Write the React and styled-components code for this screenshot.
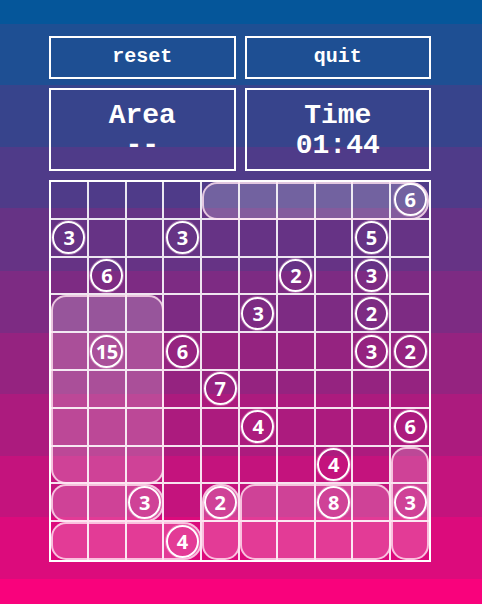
import styled, { createGlobalStyle } from 'styled-components';

const bands = [
  ['#05569a', 0, 24],
  ['#1e4f93', 24, 85],
  ['#37448c', 85, 147],
  ['#4f3b89', 147, 208],
  ['#663385', 208, 271],
  ['#7d2b83', 271, 333],
  ['#952380', 333, 394],
  ['#ac1b7e', 394, 456],
  ['#c4137d', 456, 517],
  ['#dc0b7c', 517, 579],
  ['#f9027c', 579, 700]
];

const stripes = bands.map(([c, a, b]) => `${c} ${a}px ${b}px`).join(', ');

const GlobalStyle = createGlobalStyle`
  html, body {
    margin: 0;
    height: 100%;
  }
  body {
    background: linear-gradient(to bottom, ${stripes});
    background-repeat: no-repeat;
    color: #fff;
  }
`;

const CELL = 37.8;

const Page = styled.div`
  width: 382px;
  margin-left: 49px;
  padding-top: 36px;
  display: flex;
  flex-direction: column;
  gap: 9px;
`;

const Row = styled.div`
  display: grid;
  grid-template-columns: 1fr 1fr;
  gap: 9px;
`;

const Button = styled.button`
  height: 43px;
  background: transparent;
  border: 2px solid #fff;
  color: #fff;
  font-family: 'Liberation Mono', 'Courier New', monospace;
  font-weight: 700;
  font-size: 20px;
  padding: 0 0 2px;
  cursor: pointer;
`;

const InfoBox = styled.div`
  height: 83px;
  box-sizing: border-box;
  border: 2px solid #fff;
  display: flex;
  flex-direction: column;
  align-items: center;
  justify-content: center;
  font-family: 'Liberation Mono', 'Courier New', monospace;
  font-weight: 700;
  font-size: 28px;
  line-height: 30px;
  padding-top: 2px;
`;

const Board = styled.div`
  position: relative;
  width: 382px;
  height: 382px;
  box-sizing: border-box;
  border: 2px solid #fff;
  display: grid;
  grid-template-columns: repeat(10, 1fr);
  grid-template-rows: repeat(10, 1fr);
`;

const Cell = styled.div`
  position: relative;
  display: flex;
  align-items: center;
  justify-content: center;
  border-right: ${(p) => (p.$lastCol ? 'none' : '2px solid rgba(255,255,255,0.88)')};
  border-bottom: ${(p) => (p.$lastRow ? 'none' : '2px solid rgba(255,255,255,0.88)')};
`;

// highlighted rectangle drawn over the cells it covers
const Region = styled.div`
  position: absolute;
  box-sizing: border-box;
  left: ${(p) => p.$c * CELL}px;
  top: ${(p) => p.$r * CELL}px;
  width: ${(p) => p.$w * CELL}px;
  height: ${(p) => p.$h * CELL}px;
  background: rgba(255, 255, 255, 0.2);
  border: 2px solid rgba(255, 226, 240, 0.8);
  border-radius: ${(p) => p.$radius};
  pointer-events: none;
  z-index: 1;
`;

const Clue = styled.div`
  position: relative;
  z-index: 2;
  width: 33px;
  height: 33px;
  box-sizing: border-box;
  border-radius: 50%;
  border: 2px solid #fff;
  box-shadow: 0 0 0 1px rgba(255, 200, 228, 0.35);
  display: flex;
  align-items: center;
  justify-content: center;
  font-family: 'Open Sans', 'Noto Sans', sans-serif;
  font-weight: 700;
  font-size: 20px;
  color: #fff;
  letter-spacing: -0.5px;
`;

const clues = {
  '0-9': 6,
  '1-0': 3, '1-3': 3, '1-8': 5,
  '2-1': 6, '2-6': 2, '2-8': 3,
  '3-5': 3, '3-8': 2,
  '4-1': 15, '4-3': 6, '4-8': 3, '4-9': 2,
  '5-4': 7,
  '6-5': 4, '6-9': 6,
  '7-7': 4,
  '8-2': 3, '8-4': 2, '8-7': 8, '8-9': 3,
  '9-3': 4
};

const regions = [
  { r: 0, c: 4, w: 6, h: 1, radius: '15px 18px 18px 15px' },
  { r: 3, c: 0, w: 3, h: 5, radius: '15px' },
  { r: 8, c: 0, w: 3, h: 1, radius: '15px 18px 18px 15px' },
  { r: 9, c: 0, w: 4, h: 1, radius: '15px 18px 18px 15px' },
  { r: 8, c: 4, w: 1, h: 2, radius: '18px 18px 15px 15px' },
  { r: 8, c: 5, w: 4, h: 2, radius: '15px' },
  { r: 7, c: 9, w: 1, h: 3, radius: '15px' }
];

export default function App() {
  const cells = [];
  for (let r = 0; r < 10; r++) {
    for (let c = 0; c < 10; c++) {
      const n = clues[`${r}-${c}`];
      cells.push(
        <Cell key={`${r}-${c}`} $lastCol={c === 9} $lastRow={r === 9}>
          {n && <Clue>{n}</Clue>}
        </Cell>
      );
    }
  }

  return (
    <>
      <GlobalStyle />
      <Page>
        <Row>
          <Button>reset</Button>
          <Button>quit</Button>
        </Row>
        <Row>
          <InfoBox>
            <div>Area</div>
            <div>--</div>
          </InfoBox>
          <InfoBox>
            <div>Time</div>
            <div>01:44</div>
          </InfoBox>
        </Row>
        <Board>
          {cells}
          {regions.map((g, i) => (
            <Region key={i} $r={g.r} $c={g.c} $w={g.w} $h={g.h} $radius={g.radius} />
          ))}
        </Board>
      </Page>
    </>
  );
}
